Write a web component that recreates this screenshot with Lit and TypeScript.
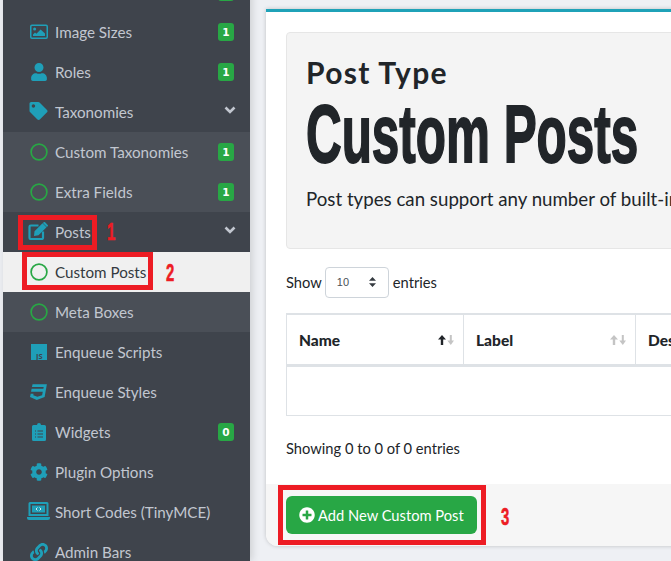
import { LitElement, html, css } from "lit";
import { customElement } from "lit/decorators.js";

const I = (vb: string, d: string, cls = "ic") =>
  html`<svg class=${cls} viewBox=${vb} aria-hidden="true"><path d=${d} fill="currentColor" fill-rule="evenodd"></path></svg>`;

const icons: Record<string, unknown> = {
  image: html`<svg class="ic" viewBox="0 0 18 18"><rect x=".75" y="2.250" width="16.500" height="13" rx="1.200" fill="none" stroke="currentColor" stroke-width="1.500"/><circle cx="4.600" cy="6" r="1.500" fill="currentColor"/><path d="M3 13v-1.600l2-2 1.400 1.400 4.200-4.200L15 10.500V13z" fill="currentColor"/></svg>`,
  user: I("0 0 448 512", "M224 256c70.700 0 128-57.300 128-128S294.700 0 224 0 96 57.300 96 128s57.300 128 128 128zm89.600 32h-16.700c-22.200 10.200-46.900 16-72.900 16s-50.600-5.800-72.900-16h-16.700C60.200 288 0 348.200 0 422.400V464c0 26.500 21.500 48 48 48h352c26.500 0 48-21.500 48-48v-41.600c0-74.200-60.200-134.400-134.400-134.400z"),
  tag: I("0 0 512 512", "M0 252.118V48C0 21.490 21.490 0 48 0h204.118a48 48 0 0 1 33.941 14.059l211.882 211.882c18.745 18.745 18.745 49.137 0 67.882L293.823 497.941c-18.745 18.745-49.137 18.745-67.882 0L14.059 286.059A48 48 0 0 1 0 252.118zM112 64c-26.510 0-48 21.490-48 48s21.490 48 48 48 48-21.490 48-48-21.490-48-48-48z", "ic big"),
  edit: html`<svg class="ic wide" viewBox="0 0 21 18"><path d="M10.500 3.500H2.800A1.300 1.300 0 0 0 1.500 4.800v10.900A1.300 1.300 0 0 0 2.800 17h10.900a1.300 1.300 0 0 0 1.300-1.300V9.500" fill="none" stroke="currentColor" stroke-width="2.200"/><path d="M6.500 9.300L14.500 1.300l4 4L10.500 13.300l-4.500.6zM15.700.3a1 1 0 0 1 1.400 0l2.600 2.600a1 1 0 0 1 0 1.400l-.8.8-4-4z" fill="currentColor"/></svg>`,
  js: html`<svg class="ic" viewBox="0 0 18 18"><rect x="1" y="1" width="16" height="16" fill="currentColor"/><text x="6" y="15.500" class="js">JS</text></svg>`,
  css: I("0 0 512 512", "M480 32l-64 368-223.300 80L0 400l19.600-94.800h82l-8 40.600L210 390.200l134.100-44.400 18.800-97.100H29.500l16-82h333.700l10.500-52.700H56.300l16.300-82H480z"),
  clip: I("0 0 14 18", "M5 2a2 2 0 0 1 4 0h3.500A1.500 1.500 0 0 1 14 3.500v13a1.500 1.500 0 0 1-1.500 1.500h-11A1.500 1.500 0 0 1 0 16.500v-13A1.500 1.500 0 0 1 1.500 2zM3 7.500v1h1v-1zM5.500 7.500v1H11v-1zM3 10.500v1h1v-1zM5.500 10.500v1H11v-1zM3 13.500v1h1v-1zM5.500 13.500v1H11v-1z"),
  gear: I("0 0 512 512", "M487.400 315.700l-42.600-24.600c4.300-23.200 4.300-47 0-70.200l42.600-24.600c4.900-2.800 7.100-8.600 5.500-14-11.100-35.600-30-67.800-54.700-94.600-3.800-4.100-10-5.100-14.800-2.300L380.800 110c-17.900-15.400-38.500-27.300-60.800-35.100V25.800c0-5.600-3.900-10.500-9.400-11.700-36.700-8.200-74.300-7.800-109.200 0-5.500 1.200-9.400 6.100-9.400 11.700V75c-22.200 7.900-42.800 19.800-60.800 35.100L88.700 85.500c-4.900-2.800-11-1.900-14.800 2.300-24.700 26.700-43.600 58.900-54.700 94.600-1.700 5.400.6 11.200 5.500 14L67.300 221c-4.300 23.200-4.300 47 0 70.200l-42.600 24.600c-4.900 2.800-7.100 8.600-5.500 14 11.100 35.600 30 67.800 54.700 94.600 3.800 4.100 10 5.100 14.800 2.300l42.600-24.600c17.900 15.400 38.500 27.300 60.800 35.100v49.200c0 5.600 3.900 10.500 9.400 11.700 36.700 8.200 74.300 7.800 109.200 0 5.500-1.200 9.400-6.100 9.400-11.700v-49.200c22.200-7.900 42.800-19.800 60.800-35.100l42.600 24.600c4.900 2.800 11 1.900 14.800-2.300 24.700-26.700 43.600-58.900 54.700-94.600 1.500-5.500-.7-11.300-5.600-14.100zM256 336c-44.100 0-80-35.900-80-80s35.900-80 80-80 80 35.900 80 80-35.900 80-80 80z"),
  laptop: html`<svg class="ic lap" viewBox="0 0 23 18"><path d="M3 0h17a1.500 1.500 0 0 1 1.500 1.500V14h-20V1.500A1.500 1.500 0 0 1 3 0zM3.500 2v10h16V2z" fill="currentColor" fill-rule="evenodd"/><path d="M0 15h23v1a2 2 0 0 1-2 2H2a2 2 0 0 1-2-2z" fill="currentColor"/><rect x="5" y="3.500" width="13" height="7" fill="currentColor"/><path d="M10.500 5.500L9 7l1.500 1.500M12.500 5.500L14 7l-1.500 1.500" fill="none" stroke="#d5e8ec" stroke-width="1"/></svg>`,
  link: I("0 0 512 512", "M326.612 185.391c59.747 59.809 58.927 155.698.36 214.590-.11.12-.24.25-.36.37l-67.200 67.200c-59.270 59.270-155.699 59.262-214.960 0-59.270-59.260-59.270-155.700 0-214.960l37.106-37.106c9.840-9.840 26.786-3.300 27.294 10.606.648 17.722 3.826 35.527 9.690 52.721 1.986 5.822.567 12.262-3.783 16.612l-13.087 13.087c-28.026 28.026-28.905 73.660-1.155 101.960 28.024 28.579 74.086 28.749 102.325.51l67.200-67.190c28.191-28.191 28.073-73.757 0-101.830-3.701-3.694-7.429-6.564-10.341-8.569a16.037 16.037 0 0 1-6.947-12.606c-.396-10.567 3.348-21.456 11.698-29.806l21.054-21.055c5.521-5.521 14.182-6.199 20.584-1.731a152.482 152.482 0 0 1 20.522 17.197zM467.547 44.449c-59.261-59.262-155.690-59.270-214.960 0l-67.200 67.200c-.12.12-.25.25-.36.37-58.566 58.892-59.387 154.781.36 214.590a152.454 152.454 0 0 0 20.521 17.196c6.402 4.468 15.064 3.789 20.584-1.731l21.054-21.055c8.350-8.350 12.094-19.239 11.698-29.806a16.037 16.037 0 0 0-6.947-12.606c-2.912-2.005-6.640-4.875-10.341-8.569-28.073-28.073-28.191-73.639 0-101.830l67.200-67.190c28.239-28.239 74.300-28.069 102.325.51 27.750 28.300 26.872 73.934-1.155 101.960l-13.087 13.087c-4.350 4.350-5.769 10.790-3.783 16.612 5.864 17.194 9.042 34.999 9.690 52.721.509 13.906 17.454 20.446 27.294 10.606l37.106-37.106c59.271-59.259 59.271-155.699.001-214.959z"),
  ring: html`<svg class="ic ring" viewBox="0 0 18 18"><circle cx="9" cy="9" r="7.900" fill="none" stroke="currentColor" stroke-width="1.700"/></svg>`,
};

type Row = { t: string; i: string; b?: string; chev?: boolean; k?: string };
const rows: Row[] = [
  { t: "", i: "image", b: "1" },
  { t: "Image Sizes", i: "image", b: "1" },
  { t: "Roles", i: "user", b: "1" },
  { t: "Taxonomies", i: "tag", chev: true },
  { t: "Custom Taxonomies", i: "ring", b: "1", k: "sub" },
  { t: "Extra Fields", i: "ring", b: "1", k: "sub" },
  { t: "Posts", i: "edit", chev: true },
  { t: "Custom Posts", i: "ring", k: "active" },
  { t: "Meta Boxes", i: "ring", k: "sub" },
  { t: "Enqueue Scripts", i: "js" },
  { t: "Enqueue Styles", i: "css" },
  { t: "Widgets", i: "clip", b: "0" },
  { t: "Plugin Options", i: "gear" },
  { t: "Short Codes (TinyMCE)", i: "laptop" },
  { t: "Admin Bars", i: "link" },
];

@customElement("app-root")
export class AppRoot extends LitElement {
  static styles = css`
    :host { display: block; width: 671px; height: 561px; overflow: hidden; background: #f0f2f6; font-family: Lato, "Open Sans", sans-serif; color: #212529; }
    .page { display: flex; height: 561px; padding-left: 3px; box-sizing: border-box; background: #eef0f4; position: relative; }
    .side { width: 247px; flex: none; background: #3f444c; margin-top: -28px; height: 589px; overflow: hidden; color: #c2c7d0; box-shadow: 2px 0 8px rgba(0,0,0,.15); position: relative; z-index: 1; }
    .row { height: 40px; display: flex; align-items: center; font-size: 15.200px; }
    .sub { background: #4a4f57; }
    .active { background: #f0f0f0; color: #343a40; margin-left: -3px; padding-left: 3px; }
    .icw { width: 23px; margin-left: 24px; margin-right: 5px; display: flex; justify-content: center; color: #1f9fb8; flex: none; }
    .ic { width: 18px; height: 18px; display: block; flex: none; }
    .ic.wide { width: 21px; margin-top: -2px; }
    .ic.lap { width: 23px; margin-top: -2px; }
    .ic.big { width: 19px; margin-top: -2px; }
    .ring { color: #28a745; }
    .js { font: bold 7.500px "Open Sans", sans-serif; fill: #3f444c; }
    .lab { flex: 1; white-space: nowrap; padding-bottom: 1px; }
    .badge { width: 16px; height: 18px; border-radius: 3px; background: #28a745; color: #fff; font: bold 10.500px/18px "DejaVu Sans", sans-serif; text-align: center; margin-right: 16px; }
    .chev { width: 12px; height: 8px; margin-right: 14px; margin-top: -4px; color: #c2c7d0; }
    .box { position: absolute; border: 5px solid #ed1c24; box-sizing: border-box; pointer-events: none; z-index: 2; }
    .b1 { left: 18px; top: 215px; width: 79px; height: 35px; }
    .b2 { left: 22px; top: 252px; width: 131px; height: 38px; }
    .b3 { left: 278px; top: 485px; width: 208px; height: 60px; }
    .num { position: absolute; z-index: 2; color: #ed1c24; font: bold 24px/24px "Liberation Sans", sans-serif; transform: scaleX(.62); transform-origin: left top; -webkit-text-stroke: .6px #ed1c24; }
    .n1 { left: 107px; top: 220px; }
    .n2 { left: 166px; top: 261px; }
    .n3 { left: 501px; top: 505px; }
    .main { flex: 1; min-width: 0; padding: 9px 0 15px 16px; }
    .card { height: 537px; box-sizing: border-box; background: #fff; border-top: 3px solid #1fa2b8; border-bottom-left-radius: 12px; box-shadow: 0 0 4px rgba(0,0,0,.2); display: flex; flex-direction: column; overflow: hidden; width: 420px; }
    .body { flex: 1; padding: 20px 0 0 20px; overflow: hidden; }
    .jumbo { height: 217px; box-sizing: border-box; background: #f4f4f4; border: 1px solid #e6e6e6; border-radius: 4px; padding: 21px 19px; white-space: nowrap; overflow: hidden; }
    .h4 { font: bold 30px/36px Lato, sans-serif; color: #212529; letter-spacing: 1.300px; }
    .h1 { font: bold 81px/70px "Liberation Sans", sans-serif; color: #212529; transform: scaleX(.61); transform-origin: left top; -webkit-text-stroke: 1.800px #212529; margin-top: 9px; width: max-content; }
    .lead { font-size: 18.700px; margin-top: 19px; }
    .len { display: flex; align-items: center; font-size: 14.700px; margin-top: 18px; height: 30px; }
    .sel { width: 64px; height: 31px; box-sizing: border-box; border: 1px solid #ced4da; border-radius: 4px; margin: 0 4px 0 3px; display: flex; align-items: center; justify-content: space-between; padding: 0 11px; font: 11px "Liberation Sans", sans-serif; color: #495057; }
    .tbl { margin-top: 16px; border: 1px solid #dee2e6; border-top-width: 2px; height: 103px; box-sizing: border-box; width: 500px; }
    .thead { height: 49px; display: flex; border-bottom: 3px solid #dee2e6; font-weight: 900; font-size: 15.500px; }
    .th { box-sizing: border-box; border-right: 1px solid #dee2e6; display: flex; align-items: center; justify-content: space-between; padding: 0 9px 0 12px; }
    .sort { width: 16px; height: 10px; display: block; }
    .info { font-size: 14.700px; margin-top: 23px; }
    .foot { height: 62px; background: #f6f6f6; box-sizing: border-box; padding: 12px 20px; display: flex; align-items: flex-start; flex: none; }
    .btn { width: 191px; height: 38px; background: #28a745; color: #fff; border-radius: 6px; font-size: 14.700px; display: flex; align-items: center; padding-left: 13px; box-sizing: border-box; gap: 3px; white-space: nowrap; }
    .btn svg { width: 16px; height: 16px; }
    .th1 { width: 177px; }
    .th2 { width: 172px; }
    .th3 { width: 120px; }
  `;

  private sorter(active: boolean) {
    const up = active ? "#212529" : "#c4c4c4";
    return html`<svg class="sort" viewBox="0 0 16 10"><path d="M4 0l4 4.500H5.200V10H2.800V4.500H0z" fill=${up}></path><path d="M11.800 0h2v5.500h2.200L12.800 10l-3.500-4.500h2.500z" fill="#c4c4c4"></path></svg>`;
  }

  render() {
    return html`<div class="page">
      <nav class="side">
        ${rows.map((r) => html`<div class="row ${r.k ?? ""}">
          <span class="icw">${icons[r.i]}</span>
          <span class="lab">${r.t}</span>
          ${r.b ? html`<span class="badge">${r.b}</span>` : ""}
          ${r.chev ? html`<svg class="chev" viewBox="0 0 12 8"><path d="M1.500 1.500L6 6l4.500-4.500" fill="none" stroke="currentColor" stroke-width="2.600"></path></svg>` : ""}
        </div>`)}
      </nav>
      <main class="main">
        <div class="card">
          <div class="body">
            <div class="jumbo">
              <div class="h4">Post Type</div>
              <div class="h1">Custom Posts</div>
              <div class="lead">Post types can support any number of built-in core features</div>
            </div>
            <div class="len">Show <span class="sel">10 <svg width="9" height="12" viewBox="0 0 9 12"><path d="M4.500 1L8 4.800H1zM4.500 11L1 7.200h7z" fill="#343a40"></path></svg></span> entries</div>
            <div class="tbl">
              <div class="thead">
                <div class="th th1">Name ${this.sorter(true)}</div>
                <div class="th th2">Label ${this.sorter(false)}</div>
                <div class="th th3">Description</div>
              </div>
            </div>
            <div class="info">Showing 0 to 0 of 0 entries</div>
          </div>
          <div class="foot">
            <div class="btn"><svg viewBox="0 0 512 512"><path fill="#fff" d="M256 8C119 8 8 119 8 256s111 248 248 248 248-111 248-248S393 8 256 8zm144 276c0 6.600-5.400 12-12 12h-92v92c0 6.600-5.400 12-12 12h-56c-6.600 0-12-5.400-12-12v-92h-92c-6.600 0-12-5.400-12-12v-56c0-6.600 5.400-12 12-12h92v-92c0-6.600 5.400-12 12-12h56c6.600 0 12 5.400 12 12v92h92c6.600 0 12 5.400 12 12v56z"></path></svg>Add New Custom Post</div>
          </div>
        </div>
      </main>
      <div class="box b1"></div>
      <div class="box b2"></div>
      <div class="box b3"></div>
      <div class="num n1">1</div>
      <div class="num n2">2</div>
      <div class="num n3">3</div>
    </div>`;
  }
}
